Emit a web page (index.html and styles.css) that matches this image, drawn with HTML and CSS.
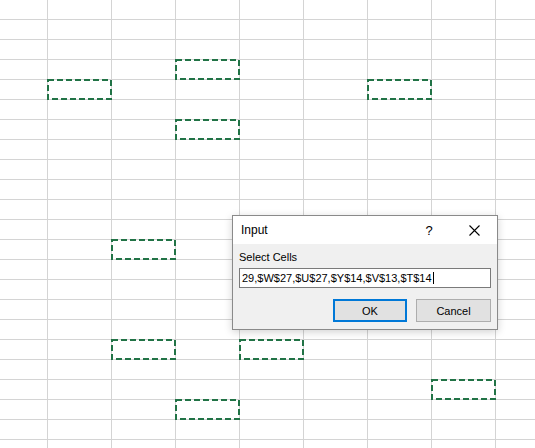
FILE: index.html
```html
<!DOCTYPE html>
<html lang="en">
<head>
  <meta charset="UTF-8">
  <meta name="viewport" content="width=device-width, initial-scale=1.0">
  <title>Select Cells</title>
  <link rel="stylesheet" href="styles.css">
</head>
<body>
<div class="sheet" id="sheet"></div>

<!-- Input box -->
<div class="dialog">
  <div class="dialog-title">
    <span class="title-text">Input</span>
    <span class="title-btn help">?</span>
    <span class="title-btn close">
      <svg width="11" height="11" viewBox="0 0 11 11"><path d="M0.5 0.5 L10.5 10.5 M10.5 0.5 L0.5 10.5" stroke="#000" stroke-width="1.1" fill="none"/></svg>
    </span>
  </div>
  <div class="dialog-body">
    <div class="field-label">Select Cells</div>
    <div class="field"><span class="field-text" id="refText"></span><span class="caret"></span></div>
    <div class="actions">
      <button class="btn btn-default">OK</button>
      <button class="btn">Cancel</button>
    </div>
  </div>
</div>

<script>
const cols = ['S','T','U','V','W','X','Y','Z','AA'];
const firstRow = 10;
const rowCount = 23;
const selected = ['$T$14','$V$13','$Y$14','$V$16','$U$22','$Z$29','$V$30','$W$27','$U$27','$Y$14','$V$13','$T$14'];

const sheet = document.getElementById('sheet');
for (let r = 0; r < rowCount; r++) {
  cols.forEach(c => {
    const cell = document.createElement('div');
    const ref = '$' + c + '$' + (firstRow + r);
    cell.className = 'cell';
    if (selected.includes(ref)) {
      cell.classList.add('marked');
      cell.innerHTML = '<svg class="marquee" width="65" height="21"><rect x="1" y="1" width="63" height="19" fill="none" stroke="#217346" stroke-width="2" stroke-dasharray="6 3"/></svg>';
    }
    sheet.appendChild(cell);
  });
}

// the box only shows the tail of the reference string
document.getElementById('refText').textContent = '29,$W$27,$U$27,$Y$14,$V$13,$T$14';
</script>
</body>
</html>
```

FILE: styles.css
```css
body {
  margin: 0;
  overflow: hidden;
  background: #fff;
  font-family: "Liberation Sans", Arial, sans-serif;
}

.sheet {
  display: grid;
  grid-template-columns: repeat(9, 64px);
  grid-auto-rows: 20px;
  margin-left: -16px;
}

.cell {
  box-sizing: border-box;
  border-right: 1px solid #d4d4d4;
  border-bottom: 1px solid #d4d4d4;
  position: relative;
}

.marquee {
  position: absolute;
  top: -1px;
  left: -1px;
  z-index: 1;
}

.dialog {
  position: absolute;
  left: 232px;
  top: 215px;
  width: 266px;
  box-sizing: border-box;
  border: 1px solid #8a8a8a;
  background: #f0f0f0;
  box-shadow: 0 2px 8px rgba(0,0,0,0.18);
  z-index: 5;
}

.dialog-title {
  height: 28px;
  background: #fff;
  display: flex;
  align-items: center;
  padding-left: 8px;
}
.title-text {
  flex: 1;
  font-size: 12px;
  color: #000;
}
.title-btn {
  display: flex;
  align-items: center;
  justify-content: center;
  height: 28px;
}
.help {
  width: 30px;
  font-size: 13px;
}
.close {
  width: 34px;
  margin-left: 13px;
  margin-right: 6px;
}

.dialog-body {
  padding: 6px 6px 7px;
  font-size: 11px;
}
.field-label {
  line-height: 14px;
  margin-bottom: 4px;
}
.field {
  height: 20px;
  box-sizing: border-box;
  border: 1px solid #7a7a7a;
  background: #fff;
  display: flex;
  align-items: center;
  padding-left: 2px;
  white-space: nowrap;
  overflow: hidden;
}
.caret {
  width: 1px;
  height: 12px;
  background: #000;
  margin-left: 1px;
}

.actions {
  display: flex;
  justify-content: flex-end;
  gap: 9px;
  margin-top: 11px;
}
.btn {
  width: 75px;
  height: 23px;
  box-sizing: border-box;
  border: 1px solid #adadad;
  background: #e1e1e1;
  font-family: inherit;
  font-size: 11px;
  color: #000;
  padding: 0;
}
.btn-default {
  width: 74px;
  border: 2px solid #0078d7;
}
```
